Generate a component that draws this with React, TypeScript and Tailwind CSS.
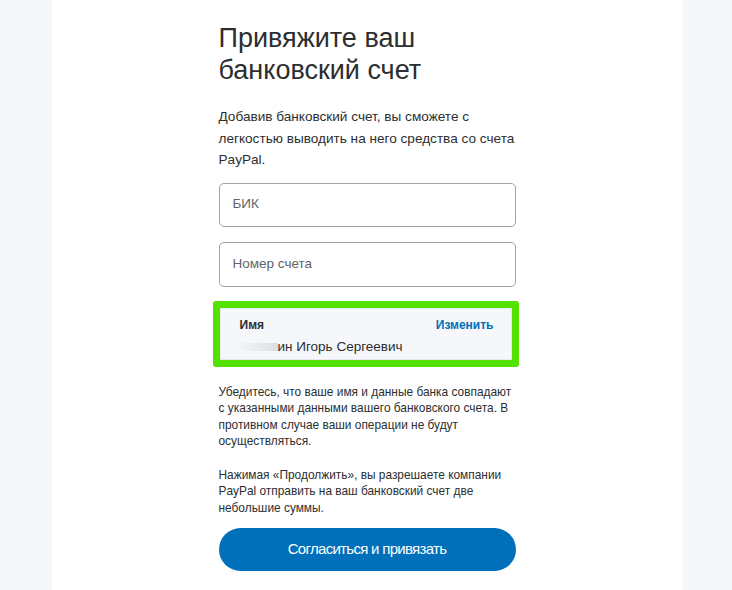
import React from "react";

export default function App() {
  return (
    <div
      className="flex h-[590px] w-[732px] overflow-hidden bg-[#f5f7fa]"
      style={{ fontFamily: '"Liberation Sans", Arial, sans-serif' }}
    >
      <div className="w-[52px] shrink-0" />
      <div className="flex w-[630px] shrink-0 justify-center bg-white">
        <div className="flex w-[297px] flex-col pt-[22px] text-[#2c2e2f]">
          <h1 className="text-[27px] font-normal leading-[32px] text-[#2c2e2f]">
            Привяжите ваш банковский счет
          </h1>
          <p className="mt-[20px] text-[13.6px] leading-[21.5px] text-[#2c2e2f]">
            Добавив банковский счет, вы сможете с легкостью выводить на него средства со счета PayPal.
          </p>
          <div className="mt-[12px] flex h-[44px] items-center rounded-[5px] border border-[#9da3a6] px-[13px] text-[13.5px] text-[#5f6569]">
            БИК
          </div>
          <div className="mt-[15px] flex h-[45px] items-center rounded-[5px] border border-[#9da3a6] px-[13px] text-[13.5px] text-[#5f6569]">
            Номер счета
          </div>
          <div className="mt-[14px] ml-[-6px] mr-[-3px] rounded-[3px] border-[7px] border-[#54e200]">
            <div className="border border-[#e6e8eb] bg-[#f5f7fa] pl-[19px] pr-[17px] pb-[3px] pt-[8px]">
              <div className="flex items-center justify-between">
                <span className="text-[12px] font-bold leading-[16px] text-[#2c2e2f]">Имя</span>
                <span className="text-[12px] font-bold leading-[16px] text-[#0070ba]">Изменить</span>
              </div>
              <div className="mt-[5px] flex items-center text-[13.5px] leading-[18px] text-[#2c2e2f]">
                <span className="inline-block h-[8px] w-[38px] bg-[linear-gradient(90deg,#f3f4f6,#dcdee1)]" />
                ин Игорь Сергеевич
              </div>
            </div>
          </div>
          <p className="mt-[17px] text-[11.9px] leading-[16.5px] text-[#2c2e2f]">
            Убедитесь, что ваше имя и данные банка совпадают с указанными данными вашего банковского счета. В противном случае ваши операции не будут осуществляться.
          </p>
          <p className="mt-[17px] text-[11.9px] leading-[16.5px] text-[#2c2e2f]">
            Нажимая «Продолжить», вы разрешаете компании PayPal отправить на ваш банковский счет две небольшие суммы.
          </p>
          <button className="mt-[12px] flex h-[43px] w-full items-center justify-center rounded-full bg-[#0070ba] text-[15px] font-normal tracking-[-0.7px] text-white">
            Согласиться и привязать
          </button>
        </div>
      </div>
      <div className="flex-1" />
    </div>
  );
}
